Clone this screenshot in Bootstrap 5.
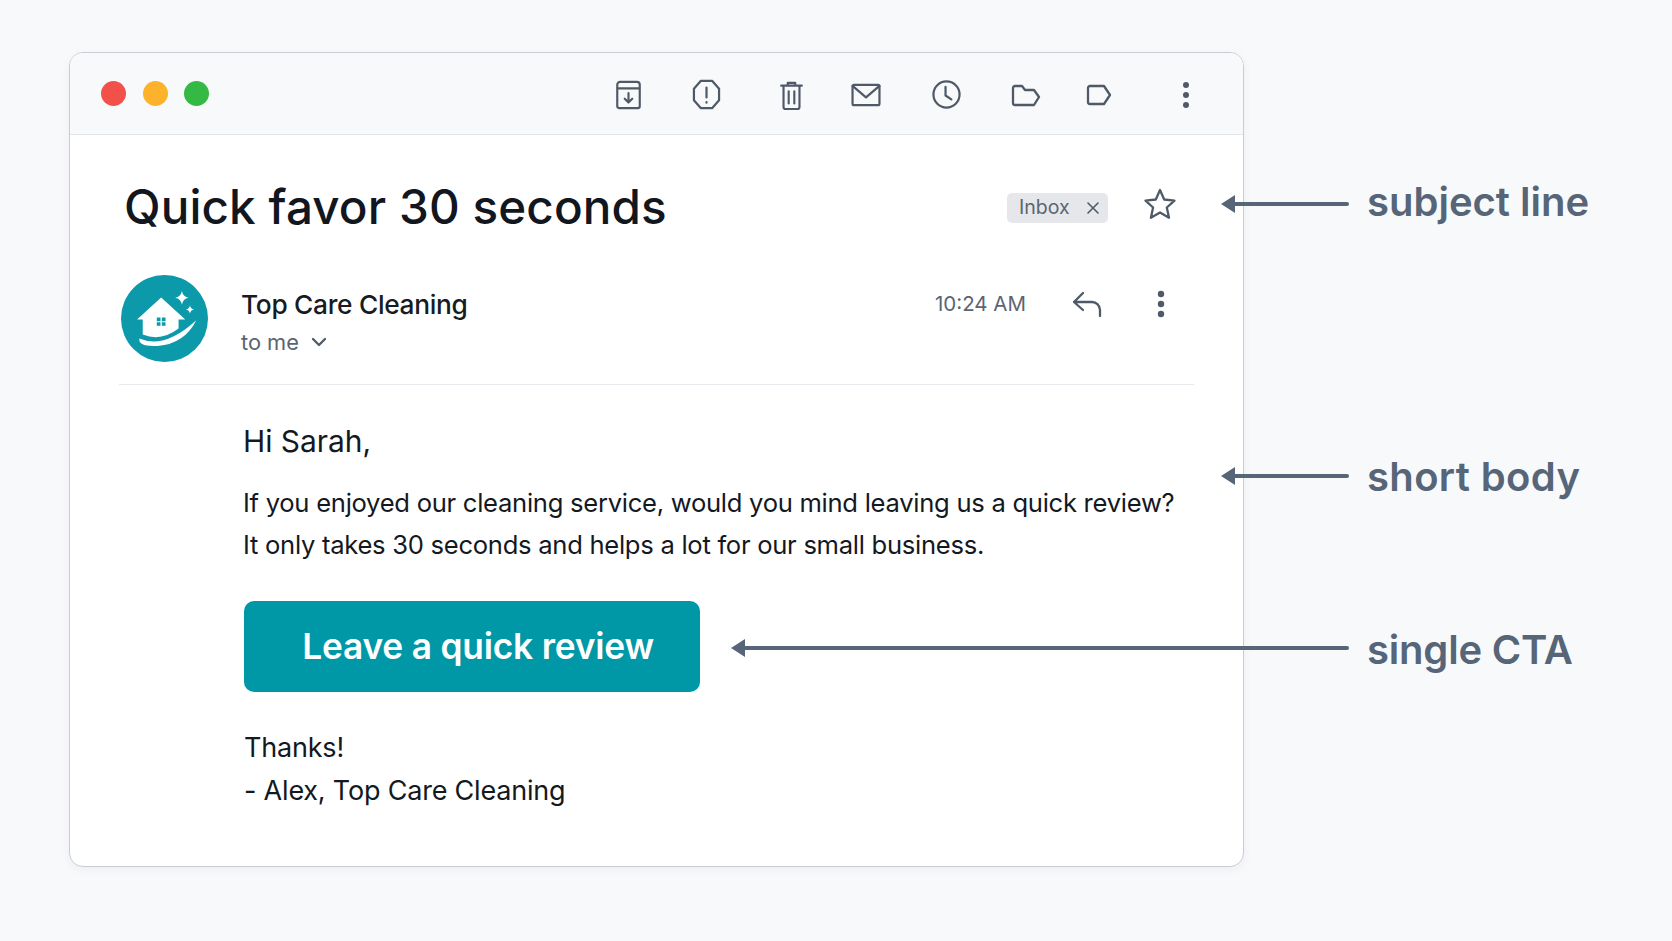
<!DOCTYPE html>
<html lang="en">
<head>
    <meta charset="UTF-8">
    <meta name="viewport" content="width=device-width, initial-scale=1.0">
    <title>Email annotation</title>
    <link href="https://cdn.jsdelivr.net/npm/bootstrap@5.3.2/dist/css/bootstrap.min.css" rel="stylesheet">
    <style>
        html, body { height: 100%; }
        body {
            background: #f8f9fb;
            font-family: Inter, "Noto Sans", sans-serif;
            color: #14181f;
            overflow: hidden;
        }
        .stage { position: relative; width: 1672px; height: 941px; padding: 52px 0 0 69px; }

        .mail-card {
            width: 1175px;
            height: 815px;
            border: 1.5px solid #c9ccd3;
            border-radius: 14px;
            box-shadow: 0 3px 10px rgba(30, 40, 60, .05);
            overflow: hidden;
        }
        .mail-bar {
            height: 82px;
            background: #f8f9fb;
            border-bottom: 1.5px solid #e2e4e9;
            padding: 0 0 0 31px;
        }
        .light-dot { width: 25px; height: 25px; border-radius: 50%; margin-right: 16.5px; }
        .tool-grid {
            display: grid;
            grid-template-columns: 78px 78px 92px 58px 102px 58px 88px 86px;
            justify-items: center;
            margin-right: 14px;
            margin-top: 2px;
        }
        .tool-grid svg, .ico { fill: none; stroke: #4f5a68; stroke-width: 2.3; stroke-linecap: round; stroke-linejoin: round; }

        .mail-main { padding: 0 49px 0 49px; }
        .subject-row { height: 135px; padding: 9px 0 0 5px; }
        .subject-text { font-size: 47.6px; font-weight: 500; margin: 0; color: #12161e; letter-spacing: .1px; }
        .chip-inbox {
            width: 101px; height: 30px;
            background: #e6e7ea;
            color: #5b6572;
            border-radius: 5px;
            font-size: 19.5px;
            font-weight: 400;
            padding: 1px 8px 0 12px;
            margin: 1px 35px 0 0;
        }
        .star-slot { margin: -6px 17px 0 0; }

        .sender-row { height: 115px; padding-bottom: 16px; border-bottom: 1.5px solid #e8e9ee; }
        .avatar-wrap { width: 122px; padding-left: 2px; margin-top: -2px; flex: none; }
        .sender-block { margin-top: 6px; }
        .sender-name { font-size: 26.3px; font-weight: 500; line-height: 36px; color: #171b22; letter-spacing: -.3px; padding-top: 1px; }
        .sender-to { font-size: 21.8px; color: #5b6572; line-height: 32px; margin-top: 3px; }
        .sender-to svg { margin-left: 11px; }
        .sender-time { font-size: 20.5px; color: #5b6572; margin-right: 45px; }
        .sender-side { margin-top: -30px; padding-right: 29px; }
        .reply-ico { margin-right: 54px; }

        .mail-copy { padding: 34px 0 0 124px; font-size: 25.6px; color: #14181f; }
        .hi-line { font-size: 29.9px; line-height: 44px; margin: 0 0 19px; }
        .para-line { line-height: 41.5px; margin: 0 0 36px; letter-spacing: -.28px; white-space: nowrap; }
        .btn-review, .btn-review:hover {
            display: block;
            width: 456px;
            height: 91px;
            margin-left: 1px;
            background: #0097a7;
            color: #fff;
            border: 0;
            border-radius: 10px;
            font-size: 35.3px;
            font-weight: 600;
            line-height: 91px;
            padding: 0 0 0 12px;
            letter-spacing: -.2px;
        }
        .sign-off { margin: 35px 0 0 1px; font-size: 27px; line-height: 42.5px; letter-spacing: -.2px; }

        /* callouts sit over the card edge */
        .callout-text { position: absolute; left: 1367px; font-size: 40px; font-weight: 600; color: #566577; line-height: 46px; white-space: nowrap; }
        .callout-wide { letter-spacing: .35px; }
        .callout-tight { letter-spacing: -.2px; }
        .callout-svg { position: absolute; left: 0; top: 0; pointer-events: none; }
    </style>
</head>
<body>
    <div class="stage">
        <div class="card mail-card">
            <div class="mail-bar d-flex align-items-center justify-content-between">
                <div class="d-flex">
                    <span class="light-dot" style="background:#f25149"></span>
                    <span class="light-dot" style="background:#fcb32b"></span>
                    <span class="light-dot" style="background:#34b944"></span>
                </div>
                <div class="tool-grid align-items-center">
                    <svg width="29" height="30" viewBox="0 0 30 32"><path d="M3 9V5a3 3 0 0 1 3-3h18a3 3 0 0 1 3 3v4M3 9h24v19a2 2 0 0 1-2 2H5a2 2 0 0 1-2-2z"/><path d="M15 14v10M11 20l4 4 4-4"/></svg>
                    <svg width="29" height="31" viewBox="0 0 30 32"><path d="M9 2h12l7 8v12l-7 8H9l-7-8V10z"/><path d="M15 9v10M15 24v.5"/></svg>
                    <svg width="25" height="30" viewBox="0 0 26 32"><path d="M2 6h22M9 6V3h8v3M4.500 6v23a2 2 0 0 0 2 2h13a2 2 0 0 0 2-2V6M10 12v13M16 12v13"/></svg>
                    <svg width="32" height="25" viewBox="0 0 32 26"><rect x="2" y="3" width="28" height="21" rx="1.500"/><path d="M2 4l14 12L30 4"/></svg>
                    <svg width="29" height="31" viewBox="0 0 30 32"><circle cx="15" cy="16" r="13.500"/><path d="M14 8v9l6 4"/></svg>
                    <svg width="30" height="24" viewBox="0 0 30 24"><path d="M2 5a2 2 0 0 1 2-2h7l3 4h9l5 7-5 8H4a2 2 0 0 1-2-2z"/></svg>
                    <svg width="26" height="24" viewBox="0 0 26 24"><path d="M2 5a2 2 0 0 1 2-2h14l6 9-6 9H4a2 2 0 0 1-2-2z"/></svg>
                    <svg width="8" height="28" viewBox="0 0 8 28"><circle cx="4" cy="4" r="3" fill="#4f5a68" stroke="none"/><circle cx="4" cy="14" r="3" fill="#4f5a68" stroke="none"/><circle cx="4" cy="24" r="3" fill="#4f5a68" stroke="none"/></svg>
                </div>
            </div>

            <div class="mail-main">
                <div class="subject-row d-flex align-items-center justify-content-between">
                    <h1 class="subject-text">Quick favor 30 seconds</h1>
                    <div class="d-flex align-items-center">
                        <span class="badge chip-inbox d-flex align-items-center justify-content-between">Inbox
                            <svg class="ico" width="14" height="14" viewBox="0 0 14 14" style="stroke-width:1.600"><path d="M2 2l10 10M12 2L2 12"/></svg>
                        </span>
                        <svg class="ico star-slot" width="34" height="34" viewBox="0 0 34 34"><path d="M17 3l4.200 9.500 10.300 1.100-7.700 6.900 2.200 10.200L17 25.500 7.900 30.700l2.200-10.200-7.600-6.900 10.300-1.100z"/></svg>
                    </div>
                </div>

                <div class="sender-row d-flex align-items-center">
                    <div class="avatar-wrap">
                        <svg width="87" height="87" viewBox="0 0 260 260">
                            <circle cx="130" cy="130" r="130" fill="#0c9aab"/>
                            <path d="M120 67L192 133H172V160Q120 200 65 178V133H48Z" fill="#fff"/>
                            <path d="M107 127h11v11h-11zM122 127h11v11h-11zM107 141h11v11h-11zM122 141h11v11h-11z" fill="#0c9aab"/>
                            <path d="M55 190Q130 222 225 135Q190 205 110 212Q50 215 55 190Z" fill="#fff"/>
                            <path d="M182 48q3 17 20 20q-17 3-20 20q-3-17-20-20q17-3 20-20zM206 91q2 10 12 12q-10 2-12 12q-2-10-12-12q10-2 12-12z" fill="#fff"/>
                        </svg>
                    </div>
                    <div class="flex-grow-1 sender-block">
                        <div class="sender-name">Top Care Cleaning</div>
                        <div class="sender-to d-flex align-items-center">to me
                            <svg class="ico" width="18" height="12" viewBox="0 0 18 12"><path d="M3 3l6 6 6-6"/></svg>
                        </div>
                    </div>
                    <div class="sender-side d-flex align-items-center">
                        <span class="sender-time">10:24 AM</span>
                        <svg class="ico reply-ico" width="32" height="28" viewBox="0 0 32 28"><path d="M12 3L3 12l9 8M3 12h18a8 8 0 0 1 8 8v6"/></svg>
                        <svg width="8" height="28" viewBox="0 0 8 28"><circle cx="4" cy="4" r="3.200" fill="#4f5a68"/><circle cx="4" cy="14" r="3.200" fill="#4f5a68"/><circle cx="4" cy="24" r="3.200" fill="#4f5a68"/></svg>
                    </div>
                </div>

                <div class="mail-copy">
                    <p class="hi-line">Hi Sarah,</p>
                    <p class="para-line">If you enjoyed our cleaning service, would you mind leaving us a quick review?<br>It only takes 30 seconds and helps a lot for our small business.</p>
                    <a href="#" class="btn btn-review">Leave a quick review</a>
                    <div class="sign-off">Thanks!<br>- Alex, Top Care Cleaning</div>
                </div>
            </div>
        </div>

        <svg class="callout-svg" width="1672" height="941">
            <g stroke="#566577" stroke-width="4" stroke-linecap="round" fill="#566577">
                <path d="M1232 204H1347"/><path d="M1221 204l14-9v18z" stroke="none"/>
                <path d="M1232 476H1347"/><path d="M1221 476l14-9v18z" stroke="none"/>
                <path d="M742 648H1347"/><path d="M731 648l14-9v18z" stroke="none"/>
            </g>
        </svg>
        <div class="callout-text" style="top:179px">subject line</div>
        <div class="callout-text callout-wide" style="top:454px">short body</div>
        <div class="callout-text callout-tight" style="top:627px">single CTA</div>
    </div>
    <script src="https://cdn.jsdelivr.net/npm/bootstrap@5.3.2/dist/js/bootstrap.bundle.min.js"></script>
</body>
</html>
